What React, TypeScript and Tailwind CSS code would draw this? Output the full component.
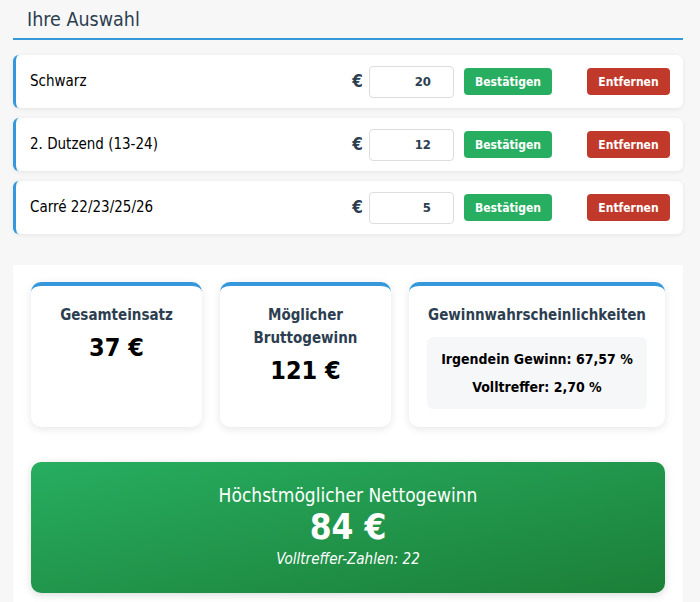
type Bet = { name: string; amount: number };

const bets: Bet[] = [
  { name: 'Schwarz', amount: 20 },
  { name: '2. Dutzend (13-24)', amount: 12 },
  { name: 'Carré 22/23/25/26', amount: 5 },
];

const font = { fontFamily: '"DejaVu Sans Condensed", "DejaVu Sans", sans-serif' };

const BetRow = ({ bet }: { bet: Bet }) => (
  <div className="flex h-[53px] items-center rounded-md border-l-[3px] border-[#3498db] bg-white pl-[14px] pr-[13px] shadow-[0_1px_4px_rgba(0,0,0,0.08)]">
    <span className="flex-1 text-[15px] text-black">{bet.name}</span>
    <span className="mr-[6px] text-[17px] font-bold text-[#2c3e50]">€</span>
    <input
      type="text"
      defaultValue={bet.amount}
      className="h-[32px] w-[85px] rounded-[4px] border border-[#ddd] bg-white pr-[22px] text-right text-[13px] font-bold text-[#2c3e50] outline-none"
    />
    <button className="ml-[10px] h-[27px] w-[88px] rounded-[4px] bg-[#27ae60] text-[12px] font-bold text-white">
      Bestätigen
    </button>
    <button className="ml-[35px] h-[27px] w-[83px] rounded-[4px] bg-[#c0392b] text-[12px] font-bold text-white">
      Entfernen
    </button>
  </div>
);

const StatCard = ({
  title,
  value,
  className,
}: {
  title: React.ReactNode;
  value: string;
  className?: string;
}) => (
  <div
    className={`h-[145px] rounded-[10px] border-t-4 border-[#3498db] bg-white px-[12px] pt-[18px] text-center shadow-[0_2px_8px_rgba(0,0,0,0.1)] ${
      className ? className : ''
    }`}
  >
    <div className="text-[15px] font-bold leading-[23px] text-[#2c3e50]">{title}</div>
    <div className="mt-[5px] text-[25px] font-bold leading-[32px] text-black">{value}</div>
  </div>
);

export default function App() {
  return (
    <div className="min-h-screen bg-[#f7f7f7] pl-[13px] pr-[17px]" style={font}>
      <h2 className="border-b-2 border-[#3498db] pb-[4px] pl-[14px] pt-[6px] text-[19.5px] leading-[28px] text-[#2c3e50]">
        Ihre Auswahl
      </h2>

      <div className="mt-[15px] flex flex-col gap-[10px]">
        {bets.map((b) => (
          <BetRow key={b.name} bet={b} />
        ))}
      </div>

      <div className="mt-[31px] min-h-[340px] bg-white px-[18px] pt-[17px]">
        <div className="flex gap-[18px]">
          <StatCard title="Gesamteinsatz" value="37 €" className="w-[171px]" />
          <StatCard
            title={
              <>
                Möglicher
                <br />
                Bruttogewinn
              </>
            }
            value="121 €"
            className="w-[171px]"
          />
          <div className="h-[145px] flex-1 rounded-[10px] border-t-4 border-[#3498db] bg-white px-[18px] pt-[18px] text-center shadow-[0_2px_8px_rgba(0,0,0,0.1)]">
            <div className="text-[15px] font-bold leading-[23px] text-[#2c3e50]">
              Gewinnwahrscheinlichkeiten
            </div>
            <div className="mt-[10px] flex flex-col gap-[8px] rounded-md bg-[#f6f7f9] py-[12px] text-[14px] font-bold leading-[20px] text-black">
              <div>Irgendein Gewinn: 67,57 %</div>
              <div>Volltreffer: 2,70 %</div>
            </div>
          </div>
        </div>

        <div className="mt-[35px] h-[131px] rounded-[10px] bg-linear-to-br from-[#27ae60] to-[#1c7f38] pt-[21px] text-center text-white shadow-[0_2px_8px_rgba(0,0,0,0.15)]">
          <div className="text-[19px] leading-[24px]">Höchstmöglicher Nettogewinn</div>
          <div className="text-[35px] font-bold leading-[40px]">84 €</div>
          <div className="mt-[2px] text-[15px] italic leading-[20px]">Volltreffer-Zahlen: 22</div>
        </div>
      </div>
    </div>
  );
}
